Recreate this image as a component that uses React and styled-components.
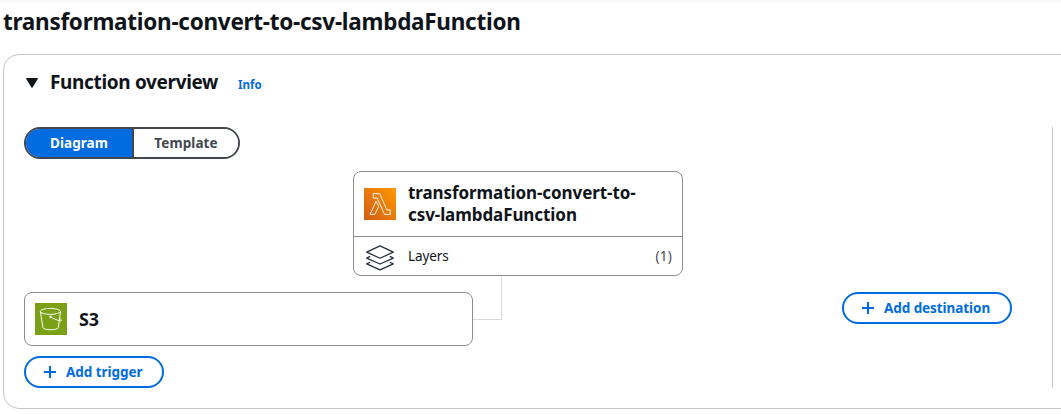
import React from "react";
import styled, { createGlobalStyle } from "styled-components";

const GlobalStyle = createGlobalStyle`
  *, *::before, *::after { box-sizing: border-box; }
  html, body { margin: 0; background: #fff; overflow: hidden; }
  body { font-family: "Noto Sans", "Open Sans", sans-serif; color: #0f141a; }
  button { font: inherit; margin: 0; cursor: pointer; }
`;

const Page = styled.main`
  height: 414px;
  width: 1061px;
  overflow: hidden;
  background: linear-gradient(#f7f7f7, #fff 4px);
`;

const PageTitle = styled.h1`
  margin: 0;
  padding: 7px 0 0 3px;
  height: 54px;
  font-size: 22.5px;
  line-height: 30px;
  font-weight: 700;
  letter-spacing: -0.27px;
  white-space: nowrap;
`;

const Panel = styled.section`
  margin-left: 3px;
  width: 1090px;
  height: 355px;
  border: 1px solid #c6c6cd;
  border-radius: 16px;
  padding: 0 20px;
`;

const PanelHeader = styled.header`
  display: flex;
  align-items: center;
  height: 72px;
  padding: 0 0 17px 2px;
`;

const Caret = styled.svg`
  width: 12px;
  height: 10px;
  margin-right: 12px;
`;

const PanelTitle = styled.h2`
  margin: 0;
  padding-bottom: 2px;
  width: 188px;
  font-size: 19px;
  line-height: 24px;
  font-weight: 700;
  letter-spacing: -0.35px;
  white-space: nowrap;
`;

const InfoLink = styled.a`
  padding-top: 4px;
  font-size: 11.5px;
  line-height: 16px;
  font-weight: 700;
  color: #006ce0;
`;

const Canvas = styled.div`
  position: relative;
  width: 1029px;
  height: 261px;
  border-right: 1px solid #c6c6cd;
`;

const Segments = styled.div`
  display: flex;
  width: 216px;
  height: 32px;
  border: 2px solid #424650;
  border-radius: 16px;
  overflow: hidden;
`;

const Segment = styled.button`
  width: ${(p) => (p.$active ? "108px" : "104px")};
  padding: 0;
  border: 0;
  border-right: ${(p) => (p.$active ? "2px solid #424650" : "0")};
  background: ${(p) => (p.$active ? "#006ce0" : "#fff")};
  color: ${(p) => (p.$active ? "#fff" : "#424650")};
  font-size: 13.5px;
  line-height: 28px;
  font-weight: 700;
  letter-spacing: ${(p) => p.$spacing};
`;

const FunctionNode = styled.article`
  margin: 12px 0 0 329px;
  width: 330px;
  height: 105px;
  border: 1px solid #8c8c94;
  border-radius: 8px;
`;

const FunctionHead = styled.div`
  display: flex;
  align-items: center;
  gap: 12px;
  height: 65px;
  padding-left: 10px;
  border-bottom: 1px solid #8c8c94;
`;

const NodeName = styled.h3`
  margin: 0;
  font-size: ${(p) => p.$size || "17px"};
  line-height: 22px;
  font-weight: 700;
  letter-spacing: -0.08px;
  white-space: nowrap;
`;

const LayersRow = styled.div`
  display: flex;
  align-items: center;
  height: 38px;
  padding: 0 10px 0 11px;
  font-size: 13.5px;
  line-height: 20px;
`;

const LayersLabel = styled.span`
  flex: 1;
  margin-left: 13px;
  letter-spacing: -0.1px;
`;

const Count = styled.span`
  color: #424650;
  letter-spacing: 0.2px;
`;

const NodeRow = styled.div`
  display: flex;
  align-items: flex-start;
  justify-content: space-between;
  margin-top: 16px;
  padding-right: 40px;
`;

const Triggers = styled.div`
  display: flex;
  flex-direction: column;
  gap: 10px;
`;

const TriggerNode = styled.article`
  display: flex;
  align-items: center;
  gap: 12px;
  width: 449px;
  height: 54px;
  padding-left: 10px;
  border: 1px solid #8c8c94;
  border-radius: 8px;
`;

const AddButton = styled.button`
  display: flex;
  align-items: center;
  gap: 10px;
  width: ${(p) => p.$width};
  height: 32px;
  padding: 0 0 0 18px;
  border: 2px solid #006ce0;
  border-radius: 16px;
  background: #fff;
  color: #006ce0;
  font-size: 13.5px;
  line-height: 20px;
  font-weight: 700;
  white-space: nowrap;
  letter-spacing: ${(p) => p.$spacing};
`;

const Connector = styled.div`
  position: absolute;
  left: 449px;
  top: 150px;
  width: 29px;
  height: 43px;
  border: solid #d9d9de;
  border-width: 0 1px 1px 0;
`;

const LambdaIcon = () => (
  <svg width="32" height="32" viewBox="0 0 32 32">
    <defs>
      <linearGradient id="lambda" x1="0" y1="1" x2="1" y2="0">
        <stop offset="0" stopColor="#d05c17" />
        <stop offset="1" stopColor="#f90" />
      </linearGradient>
    </defs>
    <path fill="url(#lambda)" d="M0 0h32v32H0z" />
    <path
      d="M9.3 5.7h6.5l7 16.3h3.5v4.4h-5.8L13.2 10H9.3zM12 13.4l2.8 4.9-4 8.1H6.1z"
      fill="none"
      stroke="#fff"
      strokeWidth=".9"
      strokeLinejoin="round"
    />
  </svg>
);

const BucketIcon = () => (
  <svg width="32" height="32" viewBox="0 0 32 32">
    <path fill="#7aa116" d="M0 0h32v32H0z" />
    <g fill="none" stroke="#fff" strokeWidth=".95" strokeLinecap="round">
      <ellipse cx="15.5" cy="8.4" rx="10.1" ry="3" />
      <path d="M5.4 8.5l2.5 16c.3 3 15 3 15.4 0L25.6 8.5M15.7 14.1c5 2.7 10.6 4.8 10.8 3.2.1-.7-.9-1.2-2.1-1.7" />
      <circle cx="15.5" cy="13.9" r=".8" fill="#fff" />
    </g>
  </svg>
);

const LayersGraphic = styled.svg`
  margin-top: 4px;
`;

const LayersIcon = () => (
  <LayersGraphic width="30" height="28" viewBox="0 0 30 28">
    <g fill="none" stroke="#232f3e" strokeWidth="1.25" strokeLinejoin="round">
      <path d="M15 1.9l13.3 6.2L15 14.2 1.7 8.1z" />
      <path d="M5.2 12.4l-3.5 1.7L15 20l13.3-5.9-3.5-1.7" />
      <path d="M5.2 18.2l-3.5 1.7L15 25.9l13.3-6-3.5-1.7" />
    </g>
  </LayersGraphic>
);

const PlusIcon = () => (
  <svg width="12" height="12" viewBox="0 0 12 12">
    <path d="M6 0v12M0 6h12" stroke="currentColor" strokeWidth="2" />
  </svg>
);

export default function App() {
  return (
    <Page>
      <GlobalStyle />
      <PageTitle>transformation-convert-to-csv-lambdaFunction</PageTitle>
      <Panel>
        <PanelHeader>
          <Caret viewBox="0 0 12 10">
            <path
              d="M.5.5h11L6 9.5z"
              fill="#0f141a"
              stroke="#0f141a"
              strokeLinejoin="round"
            />
          </Caret>
          <PanelTitle>Function overview</PanelTitle>
          <InfoLink>Info</InfoLink>
        </PanelHeader>
        <Canvas>
          <Segments>
            <Segment $active $spacing="0.05px">Diagram</Segment>
            <Segment $spacing="0.1px">Template</Segment>
          </Segments>
          <FunctionNode>
            <FunctionHead>
              <LambdaIcon />
              <NodeName>
                transformation-convert-to-
                <br />
                csv-lambdaFunction
              </NodeName>
            </FunctionHead>
            <LayersRow>
              <LayersIcon />
              <LayersLabel>Layers</LayersLabel>
              <Count>(1)</Count>
            </LayersRow>
          </FunctionNode>
          <NodeRow>
            <Triggers>
              <TriggerNode>
                <BucketIcon />
                <NodeName $size="18px">S3</NodeName>
              </TriggerNode>
              <AddButton $width="140px" $spacing="-0.05px">
                <PlusIcon />
                Add trigger
              </AddButton>
            </Triggers>
            <AddButton $width="170px" $spacing="-0.07px">
              <PlusIcon />
              Add destination
            </AddButton>
          </NodeRow>
          <Connector />
        </Canvas>
      </Panel>
    </Page>
  );
}
